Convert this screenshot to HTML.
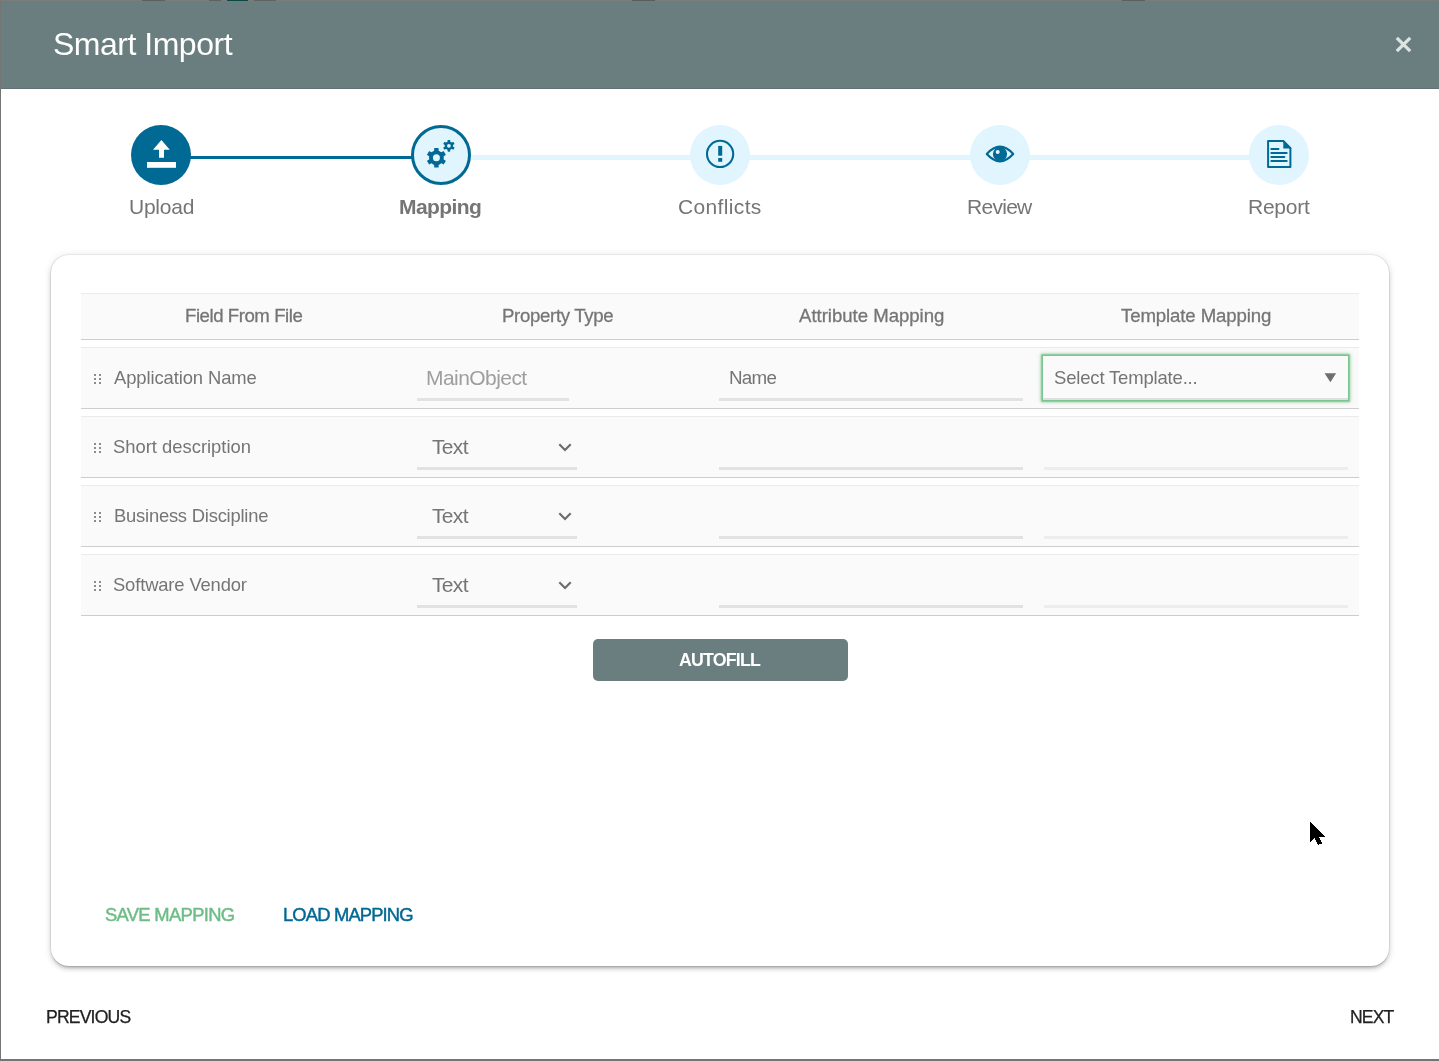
<!DOCTYPE html>
<html>
<head>
<meta charset="utf-8">
<title>Smart Import</title>
<style>
html,body{margin:0;padding:0;}
body{width:1439px;height:1061px;position:relative;overflow:hidden;background:#747474;font-family:"Liberation Sans",sans-serif;}
.a{position:absolute;}
.t{position:absolute;white-space:nowrap;line-height:1;will-change:transform;}
.circ{position:absolute;width:60px;height:60px;border-radius:50%;background:#e1f5fe;box-sizing:border-box;}
.row{position:absolute;left:81px;width:1278px;background:#fafafa;border-top:1px solid #ebebeb;border-bottom:1px solid #cdcdcd;box-sizing:border-box;}
.ul{position:absolute;height:3px;background:#e2e2e2;}
.dot{position:absolute;width:2px;height:2px;background:#8c8c8c;}
</style>
</head>
<body>

<div class="a" style="left:0;top:0;width:1439px;height:1px;background:#7b7b7b"></div>
<div class="a" style="left:142px;top:0;width:23px;height:1px;background:#5f5f5f"></div>
<div class="a" style="left:209px;top:0;width:12px;height:1px;background:#606060"></div>
<div class="a" style="left:227px;top:0;width:21px;height:1px;background:#0b4a42"></div>
<div class="a" style="left:254px;top:0;width:22px;height:1px;background:#626262"></div>
<div class="a" style="left:632px;top:0;width:23px;height:1px;background:#5c5c5c"></div>
<div class="a" style="left:1122px;top:0;width:23px;height:1px;background:#5f5f5f"></div>
<div class="a" style="left:1px;top:1px;width:1438px;height:1058px;background:#fff"></div>
<div class="a" style="left:1px;top:1px;width:1438px;height:87px;background:#6a7d7f"></div>
<div class="a" style="left:1px;top:88px;width:1438px;height:1px;background:#5f7274"></div>
<div class="t" style="left:52.6px;top:28.3px;font-size:32px;letter-spacing:-0.491px;color:#ffffff;">Smart Import</div>
<svg class="a" style="left:1390px;top:31px" width="28" height="28" viewBox="1390 31 28 28"><path d="M1396.8 37.8 L1410.2 51.2 M1410.2 37.8 L1396.8 51.2" stroke="#dde2e2" stroke-width="3.3" fill="none"/></svg>
<div class="a" style="left:190px;top:156px;width:222px;height:3px;background:#006994"></div>
<div class="a" style="left:470px;top:155px;width:780px;height:5px;background:#e1f5fe"></div>
<div class="circ" style="left:131px;top:125px;background:#006994"></div>
<div class="circ" style="left:411px;top:125px;border:3px solid #006994"></div>
<div class="circ" style="left:690px;top:125px"></div>
<div class="circ" style="left:970px;top:125px"></div>
<div class="circ" style="left:1249px;top:125px"></div>
<svg class="a" style="left:0;top:0" width="1439" height="240" viewBox="0 0 1439 240"><path d="M161.4 140 L169.8 149.8 L164 149.8 L164 157.8 L159 157.8 L159 149.8 L153 149.8 Z" fill="#fff"/><rect x="147" y="162" width="29" height="5.8" fill="#fff"/><circle cx="436.4" cy="157.8" r="7.4" fill="#006994"/><rect x="434.15" y="148.10000000000002" width="4.5" height="9.7" rx="0.6" fill="#006994" transform="rotate(0.0 436.4 157.8)"/><rect x="434.15" y="148.10000000000002" width="4.5" height="9.7" rx="0.6" fill="#006994" transform="rotate(60.0 436.4 157.8)"/><rect x="434.15" y="148.10000000000002" width="4.5" height="9.7" rx="0.6" fill="#006994" transform="rotate(120.0 436.4 157.8)"/><rect x="434.15" y="148.10000000000002" width="4.5" height="9.7" rx="0.6" fill="#006994" transform="rotate(180.0 436.4 157.8)"/><rect x="434.15" y="148.10000000000002" width="4.5" height="9.7" rx="0.6" fill="#006994" transform="rotate(240.0 436.4 157.8)"/><rect x="434.15" y="148.10000000000002" width="4.5" height="9.7" rx="0.6" fill="#006994" transform="rotate(300.0 436.4 157.8)"/><circle cx="436.4" cy="157.8" r="3.5" fill="#e1f5fe"/><circle cx="448.9" cy="145.8" r="4.2" fill="#006994"/><rect x="447.59999999999997" y="139.9" width="2.6" height="5.9" rx="0.6" fill="#006994" transform="rotate(0.0 448.9 145.8)"/><rect x="447.59999999999997" y="139.9" width="2.6" height="5.9" rx="0.6" fill="#006994" transform="rotate(60.0 448.9 145.8)"/><rect x="447.59999999999997" y="139.9" width="2.6" height="5.9" rx="0.6" fill="#006994" transform="rotate(120.0 448.9 145.8)"/><rect x="447.59999999999997" y="139.9" width="2.6" height="5.9" rx="0.6" fill="#006994" transform="rotate(180.0 448.9 145.8)"/><rect x="447.59999999999997" y="139.9" width="2.6" height="5.9" rx="0.6" fill="#006994" transform="rotate(240.0 448.9 145.8)"/><rect x="447.59999999999997" y="139.9" width="2.6" height="5.9" rx="0.6" fill="#006994" transform="rotate(300.0 448.9 145.8)"/><circle cx="448.9" cy="145.8" r="1.9" fill="#e1f5fe"/><circle cx="720.1" cy="153.9" r="13.1" stroke="#006994" stroke-width="2.1" fill="none"/><rect x="718.2" y="145.9" width="4" height="9.8" fill="#006994"/><rect x="718.2" y="158" width="4" height="3.8" fill="#006994"/><path d="M986.8 154 Q1000 139.4 1013.2 154 Q1000 168.6 986.8 154 Z" stroke="#006994" stroke-width="2.2" fill="none" stroke-linejoin="round"/><circle cx="1000" cy="154" r="7.1" fill="#006994"/><circle cx="997.7" cy="151.9" r="2" fill="#e1f5fe"/><path d="M1268.1 141 H1283.3 L1290.4 148.1 V167 H1268.1 Z" stroke="#006994" stroke-width="2" fill="none" stroke-linejoin="round"/><path d="M1283.3 140 L1291.4 148.1 V148.6 H1283.3 Z" fill="#006994"/><line x1="1271.3" y1="148.9" x2="1278.5" y2="148.9" stroke="#006994" stroke-width="2" stroke-linecap="round"/><line x1="1271.3" y1="152.9" x2="1286.7" y2="152.9" stroke="#006994" stroke-width="2" stroke-linecap="round"/><line x1="1271.3" y1="157" x2="1284.4" y2="157" stroke="#006994" stroke-width="2" stroke-linecap="round"/><line x1="1271.3" y1="160.9" x2="1286.7" y2="160.9" stroke="#006994" stroke-width="2" stroke-linecap="round"/></svg>
<div class="t" style="left:128.65px;top:195.5px;font-size:21px;letter-spacing:-0.24px;color:#757575;">Upload</div>
<div class="t" style="left:399.35px;top:195.7px;font-size:21px;letter-spacing:-0.6px;color:#757575;font-weight:700;">Mapping</div>
<div class="t" style="left:678.15px;top:195.7px;font-size:21px;letter-spacing:0.35px;color:#757575;">Conflicts</div>
<div class="t" style="left:966.85px;top:195.75px;font-size:21px;letter-spacing:-0.72px;color:#757575;">Review</div>
<div class="t" style="left:1247.85px;top:195.75px;font-size:21px;letter-spacing:-0.24px;color:#757575;">Report</div>
<div class="a" style="left:51px;top:255px;width:1338px;height:711px;border-radius:18px;background:#fff;box-shadow:0 3px 3px -2px rgba(0,0,0,.2),0 3px 4px 0 rgba(0,0,0,.14),0 1px 8px 0 rgba(0,0,0,.12),0 0 0 0.6px rgba(0,0,0,.10)"></div>
<div class="row" style="top:293px;height:47px"></div>
<div class="row" style="top:347px;height:62px"></div>
<div class="row" style="top:416px;height:62px"></div>
<div class="row" style="top:485px;height:62px"></div>
<div class="row" style="top:554px;height:62px"></div>
<div class="t" style="left:184.55px;top:307.0px;font-size:18.6px;letter-spacing:-0.443px;color:#757575;-webkit-text-stroke:0.3px #757575;">Field From File</div>
<div class="t" style="left:501.6px;top:307.0px;font-size:18.6px;letter-spacing:-0.317px;color:#757575;-webkit-text-stroke:0.3px #757575;">Property Type</div>
<div class="t" style="left:798.6px;top:307.2px;font-size:18.6px;letter-spacing:-0.025px;color:#757575;-webkit-text-stroke:0.3px #757575;">Attribute Mapping</div>
<div class="t" style="left:1121.25px;top:307.2px;font-size:18.6px;letter-spacing:-0.107px;color:#757575;-webkit-text-stroke:0.3px #757575;">Template Mapping</div>
<div class="t" style="left:113.6px;top:368.6px;font-size:18.4px;letter-spacing:-0.093px;color:#757575;">Application Name</div>
<div class="t" style="left:112.75px;top:437.7px;font-size:18.4px;letter-spacing:0.0px;color:#757575;">Short description</div>
<div class="t" style="left:113.5px;top:506.8px;font-size:18.4px;letter-spacing:-0.222px;color:#757575;">Business Discipline</div>
<div class="t" style="left:112.75px;top:575.9px;font-size:18.4px;letter-spacing:-0.143px;color:#757575;">Software Vendor</div>
<div class="dot" style="left:94px;top:374px"></div>
<div class="dot" style="left:94px;top:378px"></div>
<div class="dot" style="left:94px;top:382px"></div>
<div class="dot" style="left:99px;top:374px"></div>
<div class="dot" style="left:99px;top:378px"></div>
<div class="dot" style="left:99px;top:382px"></div>
<div class="dot" style="left:94px;top:443px"></div>
<div class="dot" style="left:94px;top:447px"></div>
<div class="dot" style="left:94px;top:451px"></div>
<div class="dot" style="left:99px;top:443px"></div>
<div class="dot" style="left:99px;top:447px"></div>
<div class="dot" style="left:99px;top:451px"></div>
<div class="dot" style="left:94px;top:512px"></div>
<div class="dot" style="left:94px;top:516px"></div>
<div class="dot" style="left:94px;top:520px"></div>
<div class="dot" style="left:99px;top:512px"></div>
<div class="dot" style="left:99px;top:516px"></div>
<div class="dot" style="left:99px;top:520px"></div>
<div class="dot" style="left:94px;top:581px"></div>
<div class="dot" style="left:94px;top:585px"></div>
<div class="dot" style="left:94px;top:589px"></div>
<div class="dot" style="left:99px;top:581px"></div>
<div class="dot" style="left:99px;top:585px"></div>
<div class="dot" style="left:99px;top:589px"></div>
<div class="t" style="left:425.5px;top:367.0px;font-size:21px;letter-spacing:-0.556px;color:#9e9e9e;">MainObject</div>
<div class="ul" style="left:417px;top:398px;width:152px"></div>
<div class="t" style="left:729.0px;top:369.2px;font-size:18.8px;letter-spacing:-0.733px;color:#757575;">Name</div>
<div class="ul" style="left:719px;top:398px;width:304px"></div>
<div class="a" style="left:1043px;top:356px;width:305px;height:44px;background:#fafafa;box-shadow:0 0 0 1.5px #7cc590,0 0 2px 2px rgba(124,197,144,.85),0 0 5px 2px rgba(124,197,144,.35)"></div>
<div class="a" style="left:1043px;top:398px;width:305px;height:2px;background:#e0dfdf"></div>
<div class="t" style="left:1053.75px;top:368.75px;font-size:18.5px;letter-spacing:-0.176px;color:#757575;">Select Template...</div>
<svg class="a" style="left:1320px;top:370px" width="20" height="16" viewBox="1320 370 20 16"><path d="M1324.6 373.3 H1336.1 L1330.35 382.3 Z" fill="#6e6e6e"/></svg>
<div class="t" style="left:432.3px;top:436.0px;font-size:21px;letter-spacing:-0.667px;color:#757575;">Text</div>
<svg class="a" style="left:555px;top:440px" width="20" height="15" viewBox="555 440 20 15"><path d="M559.3 444.3 L565 450 L570.7 444.3" stroke="#6a6a6a" stroke-width="2.1" fill="none"/></svg>
<div class="ul" style="left:417px;top:467px;width:160px"></div>
<div class="ul" style="left:719px;top:467px;width:304px"></div>
<div class="ul" style="left:1044px;top:467px;width:304px;background:#ededed"></div>
<div class="t" style="left:432.3px;top:505.0px;font-size:21px;letter-spacing:-0.667px;color:#757575;">Text</div>
<svg class="a" style="left:555px;top:509px" width="20" height="15" viewBox="555 509 20 15"><path d="M559.3 513.3 L565 519 L570.7 513.3" stroke="#6a6a6a" stroke-width="2.1" fill="none"/></svg>
<div class="ul" style="left:417px;top:536px;width:160px"></div>
<div class="ul" style="left:719px;top:536px;width:304px"></div>
<div class="ul" style="left:1044px;top:536px;width:304px;background:#ededed"></div>
<div class="t" style="left:432.3px;top:574.0px;font-size:21px;letter-spacing:-0.667px;color:#757575;">Text</div>
<svg class="a" style="left:555px;top:578px" width="20" height="15" viewBox="555 578 20 15"><path d="M559.3 582.3 L565 588 L570.7 582.3" stroke="#6a6a6a" stroke-width="2.1" fill="none"/></svg>
<div class="ul" style="left:417px;top:605px;width:160px"></div>
<div class="ul" style="left:719px;top:605px;width:304px"></div>
<div class="ul" style="left:1044px;top:605px;width:304px;background:#ededed"></div>
<div class="a" style="left:593px;top:639px;width:255px;height:42px;border-radius:5px;background:#6a7d7f"></div>
<div class="t" style="left:679.05px;top:651.8px;font-size:17.8px;letter-spacing:-0.829px;color:#ffffff;font-weight:700;">AUTOFILL</div>
<div class="t" style="left:104.8px;top:905.9px;font-size:18.4px;letter-spacing:-0.691px;color:#6dbd86;-webkit-text-stroke:0.45px #6dbd86;">SAVE MAPPING</div>
<div class="t" style="left:282.9px;top:905.9px;font-size:18.4px;letter-spacing:-0.855px;color:#006994;-webkit-text-stroke:0.45px #006994;">LOAD MAPPING</div>
<div class="t" style="left:45.5px;top:1008.7px;font-size:17.6px;letter-spacing:-0.829px;color:#212121;-webkit-text-stroke:0.25px #212121;">PREVIOUS</div>
<div class="t" style="left:1349.6px;top:1008.6px;font-size:17.6px;letter-spacing:-0.867px;color:#212121;-webkit-text-stroke:0.25px #212121;">NEXT</div>
<svg class="a" style="left:1300px;top:815px" width="35" height="35" viewBox="1300 815 35 35"><path shape-rendering="crispEdges" d="M1310 822 L1310 842 L1314.6 837.9 L1318 845 L1322.3 843.4 L1319 836.8 L1325.3 836.6 Z" fill="#000"/></svg>
</body>
</html>
